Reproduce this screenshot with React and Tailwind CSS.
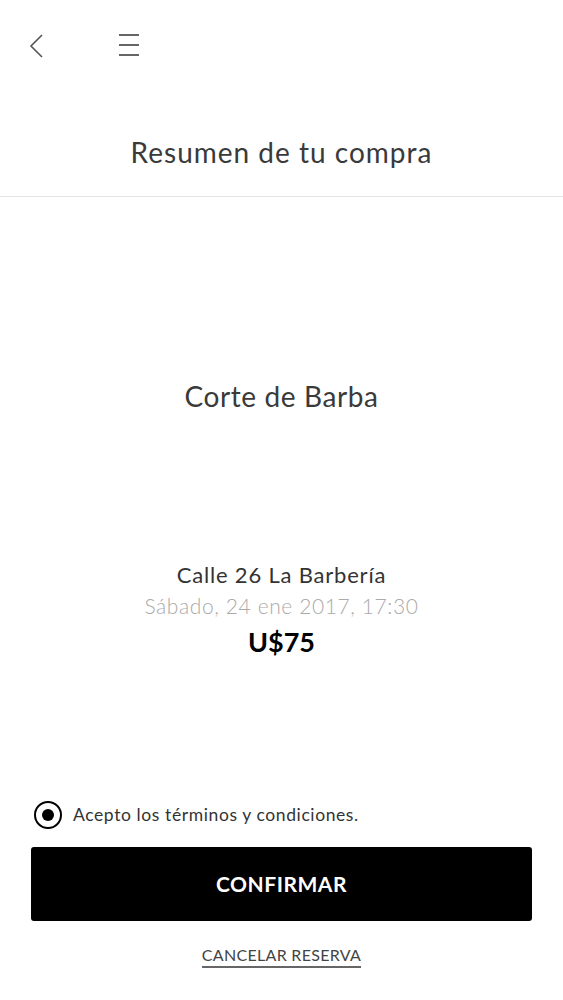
export default function App() {
  return (
    <div className="w-[563px] h-[1000px] bg-white flex flex-col" style={{ fontFamily: 'Lato, "Open Sans", sans-serif' }}>
      {/* Top bar */}
      <div className="h-[90px] flex items-start pt-[33px] pl-[28px] gap-[72px]">
        <svg width="18" height="26" viewBox="0 0 18 26" fill="none" stroke="#555" strokeWidth="1.6">
          <path d="M14 2 L3 13 L14 24" />
        </svg>
        <svg width="22" height="24" viewBox="0 0 22 24" fill="none" stroke="#666" strokeWidth="1.8">
          <path d="M1 2 H21 M1 12 H21 M1 22 H21" />
        </svg>
      </div>

      {/* Title */}
      <div className="h-[107px] flex items-center justify-center border-b border-[#e3e3e3]">
        <h1 className="text-[28px] tracking-[1px] text-[#3a3a3a] mt-[18px]">Resumen de tu compra</h1>
      </div>

      {/* Service */}
      <div className="flex justify-center mt-[178px]">
        <p className="text-[28px] tracking-[0.6px] text-[#3a3a3a]">Corte de Barba</p>
      </div>

      {/* Details */}
      <div className="flex flex-col items-center mt-[142px]">
        <p className="text-[22px] tracking-[0.8px] text-[#333] leading-[31px]">Calle 26 La Barbería</p>
        <p className="text-[21px] tracking-[0.6px] text-[#aaa] font-light leading-[32px]">Sábado, 24 ene 2017, 17:30</p>
        <p className="text-[27px] text-black font-bold leading-[40px]">U$75</p>
      </div>

      <div className="flex-1" />

      {/* Terms */}
      <div className="flex items-center gap-[11px] pl-[34px] mb-[18px]">
        <div className="w-[28px] h-[28px] rounded-full border-2 border-black flex items-center justify-center">
          <div className="w-[12px] h-[12px] rounded-full bg-black" />
        </div>
        <span className="text-[17.5px] tracking-[0.6px] text-[#333]">Acepto los términos y condiciones.</span>
      </div>

      {/* Confirm */}
      <div className="px-[31px]">
        <button className="w-full h-[74px] bg-black rounded-[3px] text-white text-[21px] font-bold tracking-wide">
          CONFIRMAR
        </button>
      </div>

      {/* Cancel */}
      <div className="flex justify-center mt-[23px] mb-[32px]">
        <span className="text-[16px] tracking-[0.3px] text-[#444] border-b-2 border-[#666] leading-[21px] pb-[1px]">CANCELAR RESERVA</span>
      </div>
    </div>
  );
}
